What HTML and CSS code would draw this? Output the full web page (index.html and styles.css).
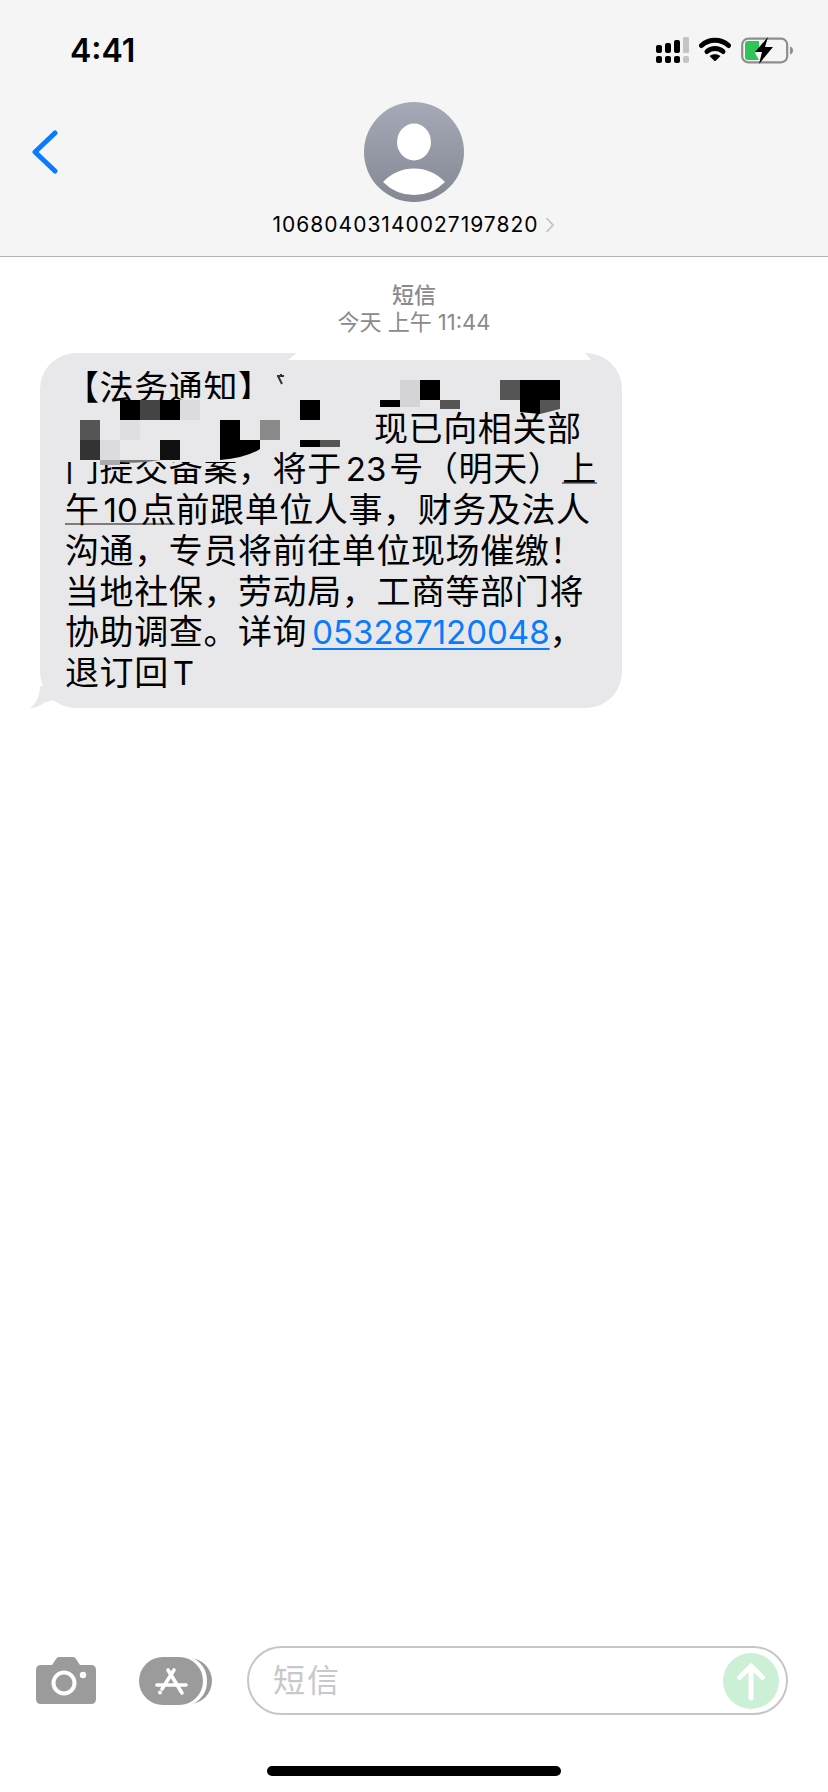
FILE: index.html
```html
<!DOCTYPE html>
<html lang="zh-CN">
<head>
<meta charset="utf-8">
<title>短信</title>
<link rel="stylesheet" href="styles.css">
</head>
<body>
<div class="page">
  <header class="header">
    <div class="status">
      <span class="time">4:41</span>
      <div class="status-icons">
        <svg class="signal" viewBox="0 0 33 26" width="33" height="26">
          <g fill="#000">
            <rect x="0" y="8" width="6" height="8" rx="2"/>
            <rect x="9" y="6" width="6" height="10" rx="2"/>
            <rect x="18" y="3" width="6" height="13" rx="2"/>
            <rect x="0" y="19" width="6" height="7" rx="2"/>
            <rect x="9" y="19" width="6" height="7" rx="2"/>
            <rect x="18" y="19" width="6" height="7" rx="2"/>
          </g>
          <g fill="#c4c4c4">
            <rect x="27" y="0" width="6" height="16" rx="1"/>
            <rect x="27" y="19" width="6" height="7" rx="2"/>
          </g>
        </svg>
        <svg class="wifi" viewBox="0 0 32 24" width="32" height="24">
          <path d="M2.500 8.500C10 1.500 22 1.500 29.500 8.500" fill="none" stroke="#000" stroke-width="5" stroke-linecap="round"/>
          <path d="M8 14.500C12.500 10.500 19.500 10.500 24 14.500" fill="none" stroke="#000" stroke-width="5" stroke-linecap="round"/>
          <path d="M10.500 19 16 24.500 21.500 19C18 16.500 14 16.500 10.500 19Z" fill="#000"/>
        </svg>
        <svg class="battery" viewBox="0 0 53 27" width="53" height="27">
          <rect x="1.200" y="1.700" width="45" height="23.600" rx="6" fill="none" stroke="#8e8e8e" stroke-width="2.200"/>
          <path d="M49 9.500C51 10 52 11.500 52 13.500 52 15.500 51 17 49 17.500Z" fill="#8e8e8e"/>
          <path d="M4 7C4 5 5 4 7 4H18V11L14 16 18 23H7C5 23 4 22 4 20Z" fill="#2fc35c"/>
          <path d="M27 0 14 15H21L18 27 32 10H24Z" fill="#000"/>
        </svg>
      </div>
    </div>
    <svg class="back" viewBox="0 0 26 44" width="26" height="44">
      <path d="M23 3 3 22 23 41" fill="none" stroke="#0a7aff" stroke-width="5" stroke-linecap="round" stroke-linejoin="round"/>
    </svg>
    <svg class="avatar" viewBox="0 0 100 100" width="100" height="100">
      <defs>
        <linearGradient id="avatarFill" x1="0" y1="0" x2="0" y2="1">
          <stop offset="0" stop-color="#a6aab8"/>
          <stop offset="1" stop-color="#848893"/>
        </linearGradient>
      </defs>
      <circle cx="50" cy="50" r="50" fill="url(#avatarFill)"/>
      <ellipse cx="50" cy="40" rx="17" ry="18.500" fill="#fff"/>
      <path d="M19 80Q32 66.500 50 66.500Q68 66.500 81 80Q68 93 50 93Q32 93 19 80Z" fill="#fff"/>
    </svg>
    <div class="contact">
      <span class="number">10680403140027197820</span>
      <svg class="chev" viewBox="0 0 10 16" width="10" height="16">
        <path d="M1.500 1 8 8 1.500 15" fill="none" stroke="#c4c4c8" stroke-width="1.800"/>
      </svg>
    </div>
  </header>

  <main class="messages">
    <div class="stamp">
      <div class="stamp-kind">短信</div>
      <div class="stamp-time">今天 上午 11:44</div>
    </div>
    <div class="bubble">
      <p class="text">【法务通知】<br><span class="gap"></span>现已向相关部<br>门提交备案，将于<span class="num">23</span>号（明天）<span class="detected">上</span><br><span class="detected">午<span class="num">10</span>点</span>前跟单位人事，财务及法人<br>沟通，专员将前往单位现场催缴！<br>当地社保，劳动局，工商等部门将<br>协助调查。详询<a class="link">053287120048</a>，<br>退订回<span class="num">T</span></p>
      <svg class="mosaic" viewBox="40 353 582 355" width="582" height="355">
        <path d="M297 353H585L591 360H288Z" fill="#fff"/>
        <path d="M165 402Q180 398 200 399L270 399V402H375V420H370V452H268L256 462H64V406Z" fill="#e8e8ea"/>
        <path d="M277 376h7M278 376l4 8M281 374v3" stroke="#333" stroke-width="2" fill="none"/>
        <rect x="400" y="380" width="20" height="27" fill="#d4d4d6"/>
        <rect x="420" y="380" width="20" height="20" fill="#000"/>
        <rect x="500" y="380" width="20" height="20" fill="#555"/>
        <rect x="520" y="380" width="40" height="20" fill="#000"/>
        <rect x="380" y="400" width="20" height="7" fill="#000"/>
        <rect x="440" y="400" width="20" height="9" fill="#555"/>
        <path d="M520 400h20v14l-20-2Z" fill="#000"/>
        <path d="M540 400h20v9l-20 5Z" fill="#555"/>
        <rect x="120" y="400" width="20" height="20" fill="#000"/>
        <rect x="140" y="400" width="20" height="20" fill="#444"/>
        <rect x="160" y="400" width="20" height="20" fill="#000"/>
        <rect x="180" y="400" width="20" height="20" fill="#dcdcde"/>
        <rect x="300" y="400" width="20" height="20" fill="#000"/>
        <rect x="80" y="420" width="20" height="20" fill="#555"/>
        <rect x="120" y="420" width="20" height="20" fill="#dfdfe1"/>
        <rect x="220" y="420" width="20" height="20" fill="#000"/>
        <rect x="260" y="420" width="20" height="20" fill="#8a8a8a"/>
        <rect x="80" y="440" width="20" height="20" fill="#333"/>
        <rect x="100" y="440" width="20" height="20" fill="#dcdcde"/>
        <rect x="160" y="440" width="20" height="20" fill="#111"/>
        <path d="M220 440h40v9q-14 9-40 11Z" fill="#000"/>
        <rect x="300" y="440" width="20" height="7" fill="#000"/>
        <rect x="320" y="440" width="20" height="7" fill="#555"/>
        <rect x="100" y="460" width="20" height="5" fill="#aaa"/>
        <path d="M120 460h40q-20 4-40 2Z" fill="#777"/>
      </svg>
      <svg class="tail" viewBox="0 0 30 22" width="30" height="22">
        <path d="M0 22C6 22 10 20 14 16.500L24 14V0H10C10 10 6 18 0 22Z" fill="#e8e8ea"/>
      </svg>
    </div>
  </main>

  <footer class="composer">
    <svg class="camera" viewBox="0 0 60 47" width="60" height="47">
      <path d="M5 8H16L20 2Q21 0 23 0H37Q39 0 40 2L44 8H55Q60 8 60 13V42Q60 47 55 47H5Q0 47 0 42V13Q0 8 5 8Z" fill="#9b9b9b"/>
      <circle cx="28" cy="26" r="10.500" fill="none" stroke="#fff" stroke-width="4"/>
      <circle cx="47" cy="18" r="3.200" fill="#fff"/>
    </svg>
    <svg class="apps" viewBox="0 0 73 48" width="73" height="48">
      <rect x="9" y="1" width="64" height="46" rx="23" fill="#9b9b9b"/>
      <rect x="4" y="-1" width="64" height="50" rx="24" fill="#fff"/>
      <rect x="0" y="0" width="64" height="48" rx="24" fill="#9b9b9b"/>
      <g fill="none" stroke="#fff" stroke-width="3.600" stroke-linecap="round">
        <path d="M29 13 43 36"/>
        <path d="M35 13 23 32"/>
        <path d="M18 28H47"/>
      </g>
      <circle cx="21" cy="35.500" r="2" fill="#fff"/>
    </svg>
    <div class="input">
      <span class="placeholder">短信</span>
      <div class="send">
        <svg viewBox="0 0 56 56" width="56" height="56">
          <path d="M28 45V13M16.500 24.500 28 13 39.500 24.500" fill="none" stroke="#fff" stroke-width="5" stroke-linecap="round" stroke-linejoin="round"/>
        </svg>
      </div>
    </div>
  </footer>
  <div class="home-row"><div class="home-bar"></div></div>
</div>
</body>
</html>
```

FILE: styles.css
```css
* { box-sizing: border-box; }
html, body { margin: 0; padding: 0; background: #fff; }
body { font-family: Inter, "Noto Sans CJK SC", sans-serif; color: #000; }
.page { width: 828px; height: 1792px; display: flex; flex-direction: column; overflow: hidden; }

.header { position: relative; height: 257px; background: #f5f5f5; border-bottom: 1px solid #b4b4b6; display: flex; flex-direction: column; align-items: center; }
.status { width: 100%; height: 102px; padding: 34px 34px 0 70px; display: flex; justify-content: space-between; align-items: flex-start; }
.time { font-size: 32px; font-weight: 600; line-height: 34px; letter-spacing: 0; }
.status-icons { display: flex; align-items: flex-start; padding-top: 3px; gap: 10px; }
.back { position: absolute; left: 32px; top: 130px; }
.avatar { display: block; }
.contact { display: flex; align-items: center; height: 24px; margin-top: 11px; gap: 7px; }
.number { font-size: 21px; line-height: 24px; letter-spacing: 1px; }
.chev { display: block; }

.messages { flex: 1; padding-top: 25px; display: flex; flex-direction: column; }
.stamp { text-align: center; color: #8a8a8e; font-size: 22px; line-height: 27px; font-weight: 500; }
.stamp-time { font-weight: 400; }
.bubble { position: relative; width: 582px; height: 355px; margin: 17px 0 0 40px; background: #e8e8ea; border-radius: 36px; padding: 15px 0 0 25px; }
.text { margin: 0; font-size: 34px; line-height: 40.700px; letter-spacing: 0.600px; white-space: nowrap; }
.gap { display: inline-block; width: 309px; }
.num { font-size: 33px; letter-spacing: 0; padding: 0 3px 0 4px; }
.detected { background: linear-gradient(#7c7c7c, #7c7c7c) 0 calc(100% - 5px) / 100% 2px no-repeat; }
.link { color: #0a7aff; font-size: 33px; text-decoration: underline; text-underline-offset: 4px; text-decoration-thickness: 2px; text-decoration-skip-ink: none; letter-spacing: 0; margin-left: 5px; }
.mosaic { position: absolute; left: 0; top: 0; }
.tail { position: absolute; left: -10px; bottom: 0; }

.composer { height: 69px; padding-left: 36px; display: flex; align-items: flex-start; }
.camera { margin-top: 11px; flex: none; }
.apps { margin: 11px 0 0 43px; flex: none; }
.input { margin-left: 35px; width: 541px; height: 69px; border: 2px solid #c6c6c8; border-radius: 35px; padding: 0 7px 0 24px; display: flex; align-items: center; justify-content: space-between; }
.placeholder { color: #c8c8cc; font-size: 32px; letter-spacing: 2px; line-height: 40px; }
.send { width: 56px; height: 56px; border-radius: 50%; background: #ccf0d5; }
.send svg { display: block; }

.home-row { height: 77px; padding-top: 51px; display: flex; justify-content: center; }
.home-bar { width: 294px; height: 10px; border-radius: 5px; background: #000; }
```
